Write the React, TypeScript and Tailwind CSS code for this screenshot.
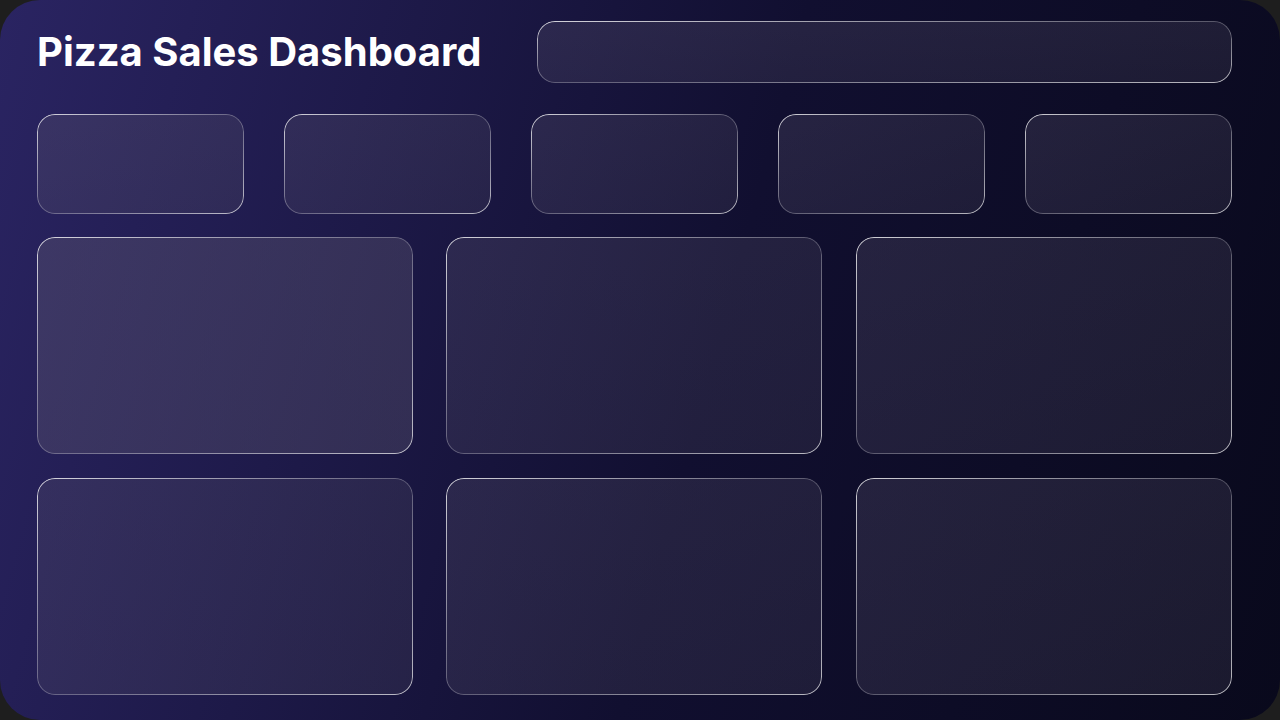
import React from "react";

const glass =
  "relative rounded-[18px] before:content-[''] before:absolute before:inset-0 before:rounded-[18px] before:p-px before:bg-linear-to-br before:from-white/80 before:via-white/25 before:to-white/70 before:[mask:linear-gradient(#000_0_0)_content-box_exclude,linear-gradient(#000_0_0)] before:pointer-events-none ";

function Card({ className = "" }: { className?: string }) {
  return <div className={glass + className} />;
}

export default function App() {
  const normal = "bg-linear-to-br from-[#5e5872]/[0.28] to-[#57526a]/[0.22]";
  return (
    <div className="w-[1280px] h-[720px] bg-[#1e1e1e] overflow-hidden">
      <div
        className="w-full h-full rounded-[40px] bg-linear-[105deg] from-[#2a2462] via-[#110f30] via-55% to-[#09091c] flex flex-col pl-[37px] pr-[48px] pt-[21px] pb-[25px]"
        style={{ fontFamily: "Inter, 'Noto Sans', sans-serif" }}
      >
        <header className="flex items-center h-[62px]">
          <h1 className="w-[500px] text-[40px] font-bold text-white leading-none tracking-normal">
            Pizza Sales Dashboard
          </h1>
          <div className={glass + "flex-1 h-full " + normal} />
        </header>

        <section className="grid grid-cols-5 gap-[40px] mt-[31px] h-[100px]">
          <Card className="bg-linear-to-br from-[#5e5872]/[0.32] to-[#57526a]/[0.26]" />
          <Card className={normal} />
          <Card className={normal} />
          <Card className={normal} />
          <Card className={normal} />
        </section>

        <section className="grid grid-cols-[376px_376px_1fr] grid-rows-2 gap-x-[33px] gap-y-[24px] mt-[23px] flex-1">
          <Card className="bg-linear-to-br from-[#5c5672]/[0.42] to-[#5a5470]/[0.38]" />
          <Card className={normal} />
          <Card className={normal + " ml-px"} />
          <Card className={normal} />
          <Card className={normal} />
          <Card className={normal + " ml-px"} />
        </section>
      </div>
    </div>
  );
}
